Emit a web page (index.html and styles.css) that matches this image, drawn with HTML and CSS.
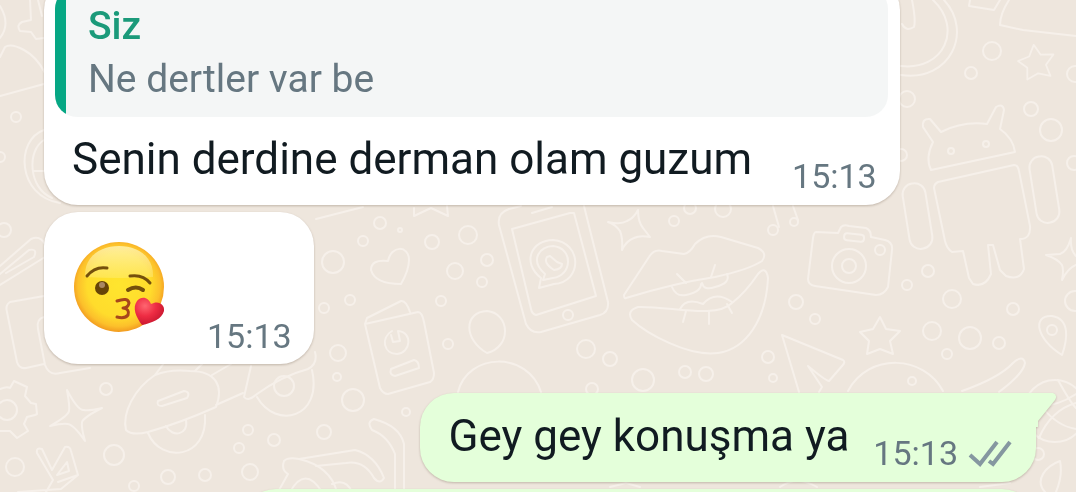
FILE: index.html
```
<!DOCTYPE html>
<html lang="tr">
<head>
  <meta charset="UTF-8">
  <meta name="viewport" content="width=device-width, initial-scale=1.0">
  <title>Sohbet</title>
  <link rel="stylesheet" href="styles.css">
</head>
<body>
  <!-- doodle wallpaper -->
  <svg class="wallpaper" viewBox="0 0 1076 492" preserveAspectRatio="xMidYMid slice" aria-hidden="true">
    <defs>
      <path id="star" d="M0-19 L6-7 L20-5 L10 5 L13 18 L0 13 L-13 18 L-11 5 L-20-4 L-7-7 Z"/>
      <path id="spark" d="M-9-27 Q2-6 8-7 Q13-6 26-9 Q8 0 6 5 Q5 10 9 24 Q-2 8 -8 7 Q-13 6 -26 9 Q-8-1 -7-6 Q-6-10 -9-27 Z"/>
    </defs>

    <!-- left edge -->
    <path d="M0 38 Q11 24 0 6 M30 0 L31 20 L22 22 Q16 25 20 31 L31 32 L36 39 L44 38 M38 0 L42 16"/>
    <path d="M0 57 L5 47 Q11 43 24 50 Q37 57 45 73 M0 96 L44 84"/>
    <path d="M44 130 C15 140 17 196 60 203 M44 140 C27 150 28 188 52 198 M34 171 H44"/>
    <path d="M0 266 L31 239 Q40 235 45 244 M0 285 L45 257 M0 274 L29 250 Q38 248 34 257 L6 273"/>
    <path d="M44 296 L10 302 Q5 305 7 312 L17 362 Q19 369 26 368 L44 364 M44 317 Q36 319 38 329 L45 365 Q49 376 60 373 L90 368"/>
    <path d="M0 389 Q7 386 10 388 L14 381 L27 387 L25 396 L31 403 L36 404 L37 414 L35 415 L27 417 L24 424 L28 431 L17 438 L10 431 L0 431"/>
    <circle cx="7" cy="410" r="10"/>
    <use href="#spark" x="76" y="417"/>
    <path d="M78 475 L61 489 L18 492 M53 480 L37 453 Q36 447 42 449 L52 470 L65 447 Q70 446 71 451 L78 475 L58 482 M57 475 L67 462 L69 471 Z M53 480 L46 492"/>
    <circle cx="16" cy="117" r="5"/><circle cx="0" cy="157" r="5"/><circle cx="4" cy="230" r="7"/>
    <circle cx="15" cy="467" r="9"/><circle cx="114" cy="455" r="10"/><circle cx="106" cy="389" r="6"/><circle cx="134" cy="486" r="5"/>

    <!-- scooter and bird below the second bubble -->
    <path d="M155 375 C134 389 122 413 126 430 Q132 436 148 432 Q180 423 216 407 C224 386 216 371 190 371 Q170 369 155 375 Z M155 375 L164 363 M195 371 L204 362 M212 375 L231 364 M216 405 L243 393"/>
    <path d="M158 401 L184 391 Q191 392 187 398 L162 406 Q156 406 158 401 Z"/>
    <path d="M148 433 C161 464 208 459 205 415 M166 426 C172 438 189 435 186 420"/>
    <path d="M251 366 L244 397 Q248 402 257 394 Q282 376 308 369 Q318 364 315 352 M257 397 C276 430 323 418 312 370"/>
    <circle cx="284" cy="386" r="10"/>
    <path d="M278 492 L288 474 Q281 470 284 461 Q288 457 299 459 L355 450 Q375 455 384 478 Q380 485 374 478 Q364 460 346 463 L316 466 M299 459 Q330 466 337 492 M290 492 Q305 465 322 492 M332 484 Q346 478 352 492"/>
    <path d="M395 492 L395 454 Q388 436 372 430 Q366 422 374 419 Q400 426 404 444 V492"/>
    <circle cx="248" cy="430" r="5"/><circle cx="239" cy="448" r="5"/><circle cx="274" cy="440" r="6"/><circle cx="168" cy="477" r="7"/>
    <circle cx="205" cy="475" r="6"/><circle cx="250" cy="472" r="8"/><circle cx="324" cy="432" r="7"/><circle cx="406" cy="412" r="4"/>

    <!-- heart, card, balloon -->
    <path d="M316 219 L363 207 M414 208 V216 L431 208 L448 216 L447 206"/>
    <path d="M401 284 Q375 284 371 270 Q371 259 388 261 C391 245 409 245 409 260 Q409 270 401 284 Z"/>
    <path d="M365 324 L418 312 Q422 312 424 322 L434 373 Q434 380 430 382 L388 394 Q383 394 380 388 L365 324 L367 318 L401 301 Q406 300 410 312"/>
    <path d="M392 331 C380 338 384 354 397 354 C411 353 413 332 398 331 L400 341 L393 342 L391 335"/>
    <path d="M391 369 L414 360 Q419 361 419 368 L395 376 Q389 375 391 369 Z"/>
    <path d="M487 353 C463 339 464 312 487 311 C510 313 512 347 487 353 Z M458 392 C468 352 528 351 541 392"/>
    <circle cx="333" cy="262" r="11"/><circle cx="380" cy="223" r="6"/><circle cx="363" cy="241" r="5"/><circle cx="400" cy="230" r="2"/>
    <circle cx="432" cy="242" r="7"/><circle cx="468" cy="235" r="9"/><circle cx="455" cy="271" r="8"/><circle cx="487" cy="260" r="6"/>
    <circle cx="482" cy="282" r="5"/><circle cx="324" cy="308" r="5"/><circle cx="350" cy="300" r="5"/><circle cx="441" cy="301" r="5"/>
    <circle cx="448" cy="344" r="5"/><circle cx="338" cy="353" r="8"/><circle cx="337" cy="377" r="4"/><circle cx="353" cy="400" r="11"/>

    <!-- phone -->
    <path d="M584 206 L608 302 Q609 312 600 315 L541 332 Q531 334 526 324 L499 225 Q497 213 509 209 L521 206 M574 213 L596 296 L536 315 Q532 314 531 309 L512 229 L570 213 Z M532 213 L552 207"/>
    <path d="M539 288 L541 278 C521 262 532 240 553 240 C582 242 583 282 554 284 Z M543 280 L545 274 C529 260 540 246 553 246 C574 248 572 276 553 278 Z M547 257 Q543 263 554 270 Q562 269 562 264 L557 262 L550 256 Z"/>
    <circle cx="568" cy="315" r="5"/>
    <path d="M638 210 Q638 222 643 228 L650 237 Q640 235 634 238 Q626 241 622 250 Q623 238 620 231 Q616 225 608 222 Q621 225 627 221 Q634 218 638 210 Z"/>

    <!-- lips -->
    <path d="M626 298 Q624 299 624 295 L649 257 Q654 249 662 251 L684 254 Q690 253 695 244 Q706 233 721 237 L758 248 Q768 253 762 261 Q748 270 715 277 Q675 283 626 298 Z"/>
    <path d="M638 307 C670 306 716 319 732 303 Q746 292 758 274 Q766 265 768 278 C766 320 746 349 718 353 C688 357 646 333 632 320 Q626 311 638 307 Z"/>
    <path d="M672 287 Q676 297 686 295 Q701 292 701 284 M702 283 Q704 291 715 287 Q731 283 727 274 M680 309 Q686 297 703 304 Q715 290 732 302 M677 274 L686 283 M715 265 L711 277 M686 311 L683 322 M709 312 V324 M727 304 L732 313"/>

    <!-- notes, camera -->
    <path d="M773 206 L779 227 M793 206 L798 220"/><circle cx="773" cy="230" r="5"/><circle cx="794" cy="222" r="4"/>
    <path d="M816 232 L838 233 L841 227 Q844 224 849 226 L866 228 Q871 230 871 237 L885 240 Q893 242 892 250 L888 287 Q884 295 876 295 L815 286 Q808 285 808 279 L813 238 Q814 232 816 232 Z"/>
    <rect x="844" y="234" width="20" height="7" rx="3" transform="rotate(6 854 238)"/>
    <circle cx="849" cy="266" r="17"/><circle cx="849" cy="266" r="7"/><circle cx="880" cy="250" r="5"/>
    <circle cx="674" cy="221" r="5"/><circle cx="690" cy="208" r="6"/><circle cx="723" cy="209" r="8"/>
    <circle cx="586" cy="349" r="9"/><circle cx="610" cy="359" r="7"/><circle cx="643" cy="380" r="11"/><circle cx="685" cy="372" r="6"/>
    <circle cx="706" cy="374" r="7"/><circle cx="592" cy="389" r="6"/><circle cx="796" cy="302" r="7"/><circle cx="815" cy="319" r="5"/>
    <circle cx="768" cy="357" r="6"/><circle cx="773" cy="378" r="4"/>

    <!-- paper plane, star, dome -->
    <path d="M799 392 L782 335 L843 360 Q846 362 842 366 L829 381 Q826 381 808 366 L822 387 L819 392"/>
    <use href="#star" x="880" y="336"/>
    <path d="M848 391 C869 352 924 355 943 391"/>
    <path d="M962 391 Q999 378 1013 363 Q1023 354 1025 363 C1023 375 1004 388 999 392"/>
    <circle cx="932" cy="331" r="9"/><circle cx="970" cy="338" r="11"/><circle cx="999" cy="343" r="6"/><circle cx="947" cy="354" r="5"/>
    <circle cx="912" cy="381" r="4"/><circle cx="1013" cy="309" r="6"/><circle cx="928" cy="271" r="6"/><circle cx="907" cy="285" r="5"/><circle cx="952" cy="299" r="9"/>

    <!-- clock, robot -->
    <path d="M901 75 C951 82 973 31 944 0 M901 66 C944 71 963 28 933 0 M902 24 Q906 32 914 27 Q916 20 912 0"/>
    <path d="M970 0 L969 6 L994 10 L1000 0 M1009 0 Q1000 14 1000 25 L1023 30 L1076 36"/>
    <use href="#star" x="1036" y="62" transform="rotate(-9 1036 62) translate(104 6) scale(.9)"/>
    <circle cx="992" cy="51" r="9"/><circle cx="971" cy="73" r="6"/><circle cx="907" cy="99" r="8"/><circle cx="1075" cy="74" r="8"/>
    <circle cx="1031" cy="109" r="7"/><circle cx="1051" cy="130" r="11"/><circle cx="1074" cy="163" r="7"/><circle cx="901" cy="155" r="6"/>
    <path d="M931 170 Q925 158 933 142 L923 127 Q922 118 930 119 L941 132 Q963 121 987 124 L996 107 Q1003 103 1004 110 L1000 129 Q1013 138 1015 152 L931 170 Z"/>
    <circle cx="951" cy="151" r="3"/><circle cx="986" cy="144" r="3"/>
    <path d="M938 182 L1014 165 Q1018 165 1019 171 L1030 226 Q1031 239 1020 239 L1024 269 Q1020 281 1006 276 L1000 270 L993 245 H988 L991 274 Q985 288 973 284 L969 278 L963 251 L952 252 Q947 249 945 241 L934 188 Q934 184 938 182 Z"/>
    <rect x="906" y="183" width="23" height="66" rx="11" transform="rotate(-9 918 216)"/>
    <rect x="1033" y="156" width="23" height="67" rx="11" transform="rotate(-9 1045 190)"/>
    <path d="M1071 238 Q1070 250 1076 256 M1071 238 Q1067 252 1060 254 L1046 255 Q1058 259 1062 265 Q1064 270 1062 280 Q1068 268 1076 265"/>
    <path d="M1062 355 C1037 340 1031 315 1052 316 C1071 319 1067 341 1062 355 Z"/>
    <circle cx="1052" cy="330" r="5"/><circle cx="1075" cy="301" r="10"/>
    <circle cx="1055" cy="411" r="31"/>
    <path d="M1025 405 Q1052 410 1076 394 M1058 380 Q1070 402 1076 408 M1042 407 Q1057 426 1076 429 M1039 438 Q1051 410 1076 403"/>
    <path d="M1045 492 C1034 480 1046 466 1060 461 Q1063 475 1056 492"/>
    <circle cx="1038" cy="454" r="6"/>
    <path d="M780 487 Q797 475 817 487 M610 487 L626 483 L640 487 M980 487 L1010 483"/>
  </svg>

  <main class="chat">
    <article class="bubble incoming reply">
      <blockquote class="quote">
        <strong class="quote-name">Siz</strong>
        <p class="quote-text">Ne dertler var be</p>
      </blockquote>
      <div class="line">
        <p class="text">Senin derdine derman olam guzum</p>
        <time class="time">15:13</time>
      </div>
    </article>

    <article class="bubble incoming emoji-bubble">
      <svg class="emoji" viewBox="0 0 92 92" role="img" aria-label="Öpücük gönderen yüz">
        <defs>
          <radialGradient id="face" cx="50%" cy="48%" r="52%">
            <stop offset="0" stop-color="#ffe52e"/>
            <stop offset=".68" stop-color="#ffdc2c"/>
            <stop offset=".88" stop-color="#fcc02b"/>
            <stop offset="1" stop-color="#f29b20"/>
          </radialGradient>
          <linearGradient id="shine" x1="0" y1="0" x2="0" y2="1">
            <stop offset="0" stop-color="#fff5b8" stop-opacity=".8"/>
            <stop offset="1" stop-color="#fff3a0" stop-opacity=".3"/>
          </linearGradient>
          <radialGradient id="love" cx="35%" cy="30%" r="75%">
            <stop offset="0" stop-color="#ff6670"/>
            <stop offset=".5" stop-color="#ee2c43"/>
            <stop offset="1" stop-color="#c5152e"/>
          </radialGradient>
        </defs>
        <circle cx="45" cy="45" r="45" fill="url(#face)"/>
        <path d="M11 35 C10 14 27 4 45 4 S80 14 79 35 Q45 37 11 35 Z" fill="url(#shine)"/>
        <g fill="none" stroke="#75500c" stroke-width="3" stroke-linecap="round">
          <path d="M13 34 Q21 24 33 26"/>
          <path d="M56 34 Q69 32 76 41"/>
          <path d="M54 48 Q62 43 69 48" stroke-width="4"/>
        </g>
        <circle cx="28" cy="46" r="7" fill="#664407"/>
        <circle cx="28" cy="43" r="3" fill="#a88763"/>
        <path d="M43 59 Q54 55 55 61 Q54 66 49 66 Q56 67 54 73 Q51 77 43 75" fill="none" stroke="#a7471b" stroke-width="3" stroke-linecap="round" stroke-linejoin="round"/>
        <path d="M68 83 C62 75 58 66 63 59 C68 53 75 56 77 62 C84 58 91 62 90 69 C88 77 78 81 68 83 Z" fill="url(#love)"/>
      </svg>
      <time class="time">15:13</time>
    </article>

    <article class="bubble outgoing first">
      <p class="text">Gey gey konuşma ya</p>
      <span class="meta">
        <time class="time">15:13</time>
        <svg class="ticks" viewBox="0 0 44 28" role="img" aria-label="İletildi">
          <path d="M2 16 L12 25 L29 3 M21 22 L25 25 L42 3"/>
        </svg>
      </span>
      <svg class="tail" viewBox="0 0 22 34" aria-hidden="true">
        <path d="M0 0 H17 Q22 2 19 7 L2 28 V34 L0 34 Z"/>
      </svg>
    </article>

    <article class="bubble outgoing next"></article>
  </main>
</body>
</html>
```
FILE: styles.css
```
* {
  box-sizing: border-box;
}
body {
  margin: 0;
  height: 100vh;
  overflow: hidden;
  background: #eee6dd;
  color: #111b21;
  font-family: Roboto, "Noto Sans", sans-serif;
}
p, blockquote {
  margin: 0;
}
.wallpaper {
  position: fixed;
  inset: 0;
  width: 100%;
  height: 100%;
  fill: none;
  stroke: #f6f0ea;
  stroke-width: 2;
  stroke-linecap: round;
  stroke-linejoin: round;
}
/* the list is scrolled a little past the top of the first message */
.chat {
  position: relative;
  display: flex;
  flex-direction: column;
  align-items: flex-start;
  gap: 7px;
  margin-top: -24px;
  padding: 0 40px 0 44px;
}
.bubble {
  position: relative;
  border-radius: 34px;
  filter: drop-shadow(0 1px 1px rgba(90, 70, 50, 0.3));
}
.incoming {
  background: #fff;
}
.outgoing {
  align-self: flex-end;
  background: #e4ffda;
}
.reply {
  padding: 11px 12px 9px 11px;
}
.quote {
  padding: 17px 24px 15px 33px;
  border-radius: 22px;
  background: linear-gradient(to right, #06a784 11px, #f4f6f6 11px);
}
.quote-name {
  display: block;
  color: #1b9a7a;
  font-size: 39px;
  font-weight: 500;
  line-height: 44px;
}
.quote-text {
  margin-top: 8px;
  color: #667781;
  font-size: 39px;
  line-height: 46px;
}
.line {
  display: flex;
  align-items: flex-end;
  gap: 40px;
  padding: 14px 11px 0 17px;
}
.text {
  font-size: 44px;
  line-height: 56px;
  padding-bottom: 9px;
}
.time {
  color: #667781;
  font-size: 34px;
  line-height: 40px;
}
.emoji-bubble {
  display: flex;
  align-items: flex-end;
  gap: 41px;
  padding: 30px 22px 8px 30px;
}
.emoji {
  width: 92px;
  height: 92px;
  margin-bottom: 22px;
}
.first {
  display: flex;
  align-items: flex-end;
  gap: 24px;
  margin-top: 22px;
  padding: 15px 24px 9px 29px;
  border-top-right-radius: 0;
}
.meta {
  display: flex;
  align-items: center;
  gap: 10px;
}
.ticks {
  width: 44px;
  height: 28px;
  fill: none;
  stroke: #8597a0;
  stroke-width: 4;
}
.tail {
  position: absolute;
  top: 0;
  left: 100%;
  width: 22px;
  height: 34px;
  fill: #e4ffda;
}
.next {
  width: 80%;
  height: 80px;
}
```
